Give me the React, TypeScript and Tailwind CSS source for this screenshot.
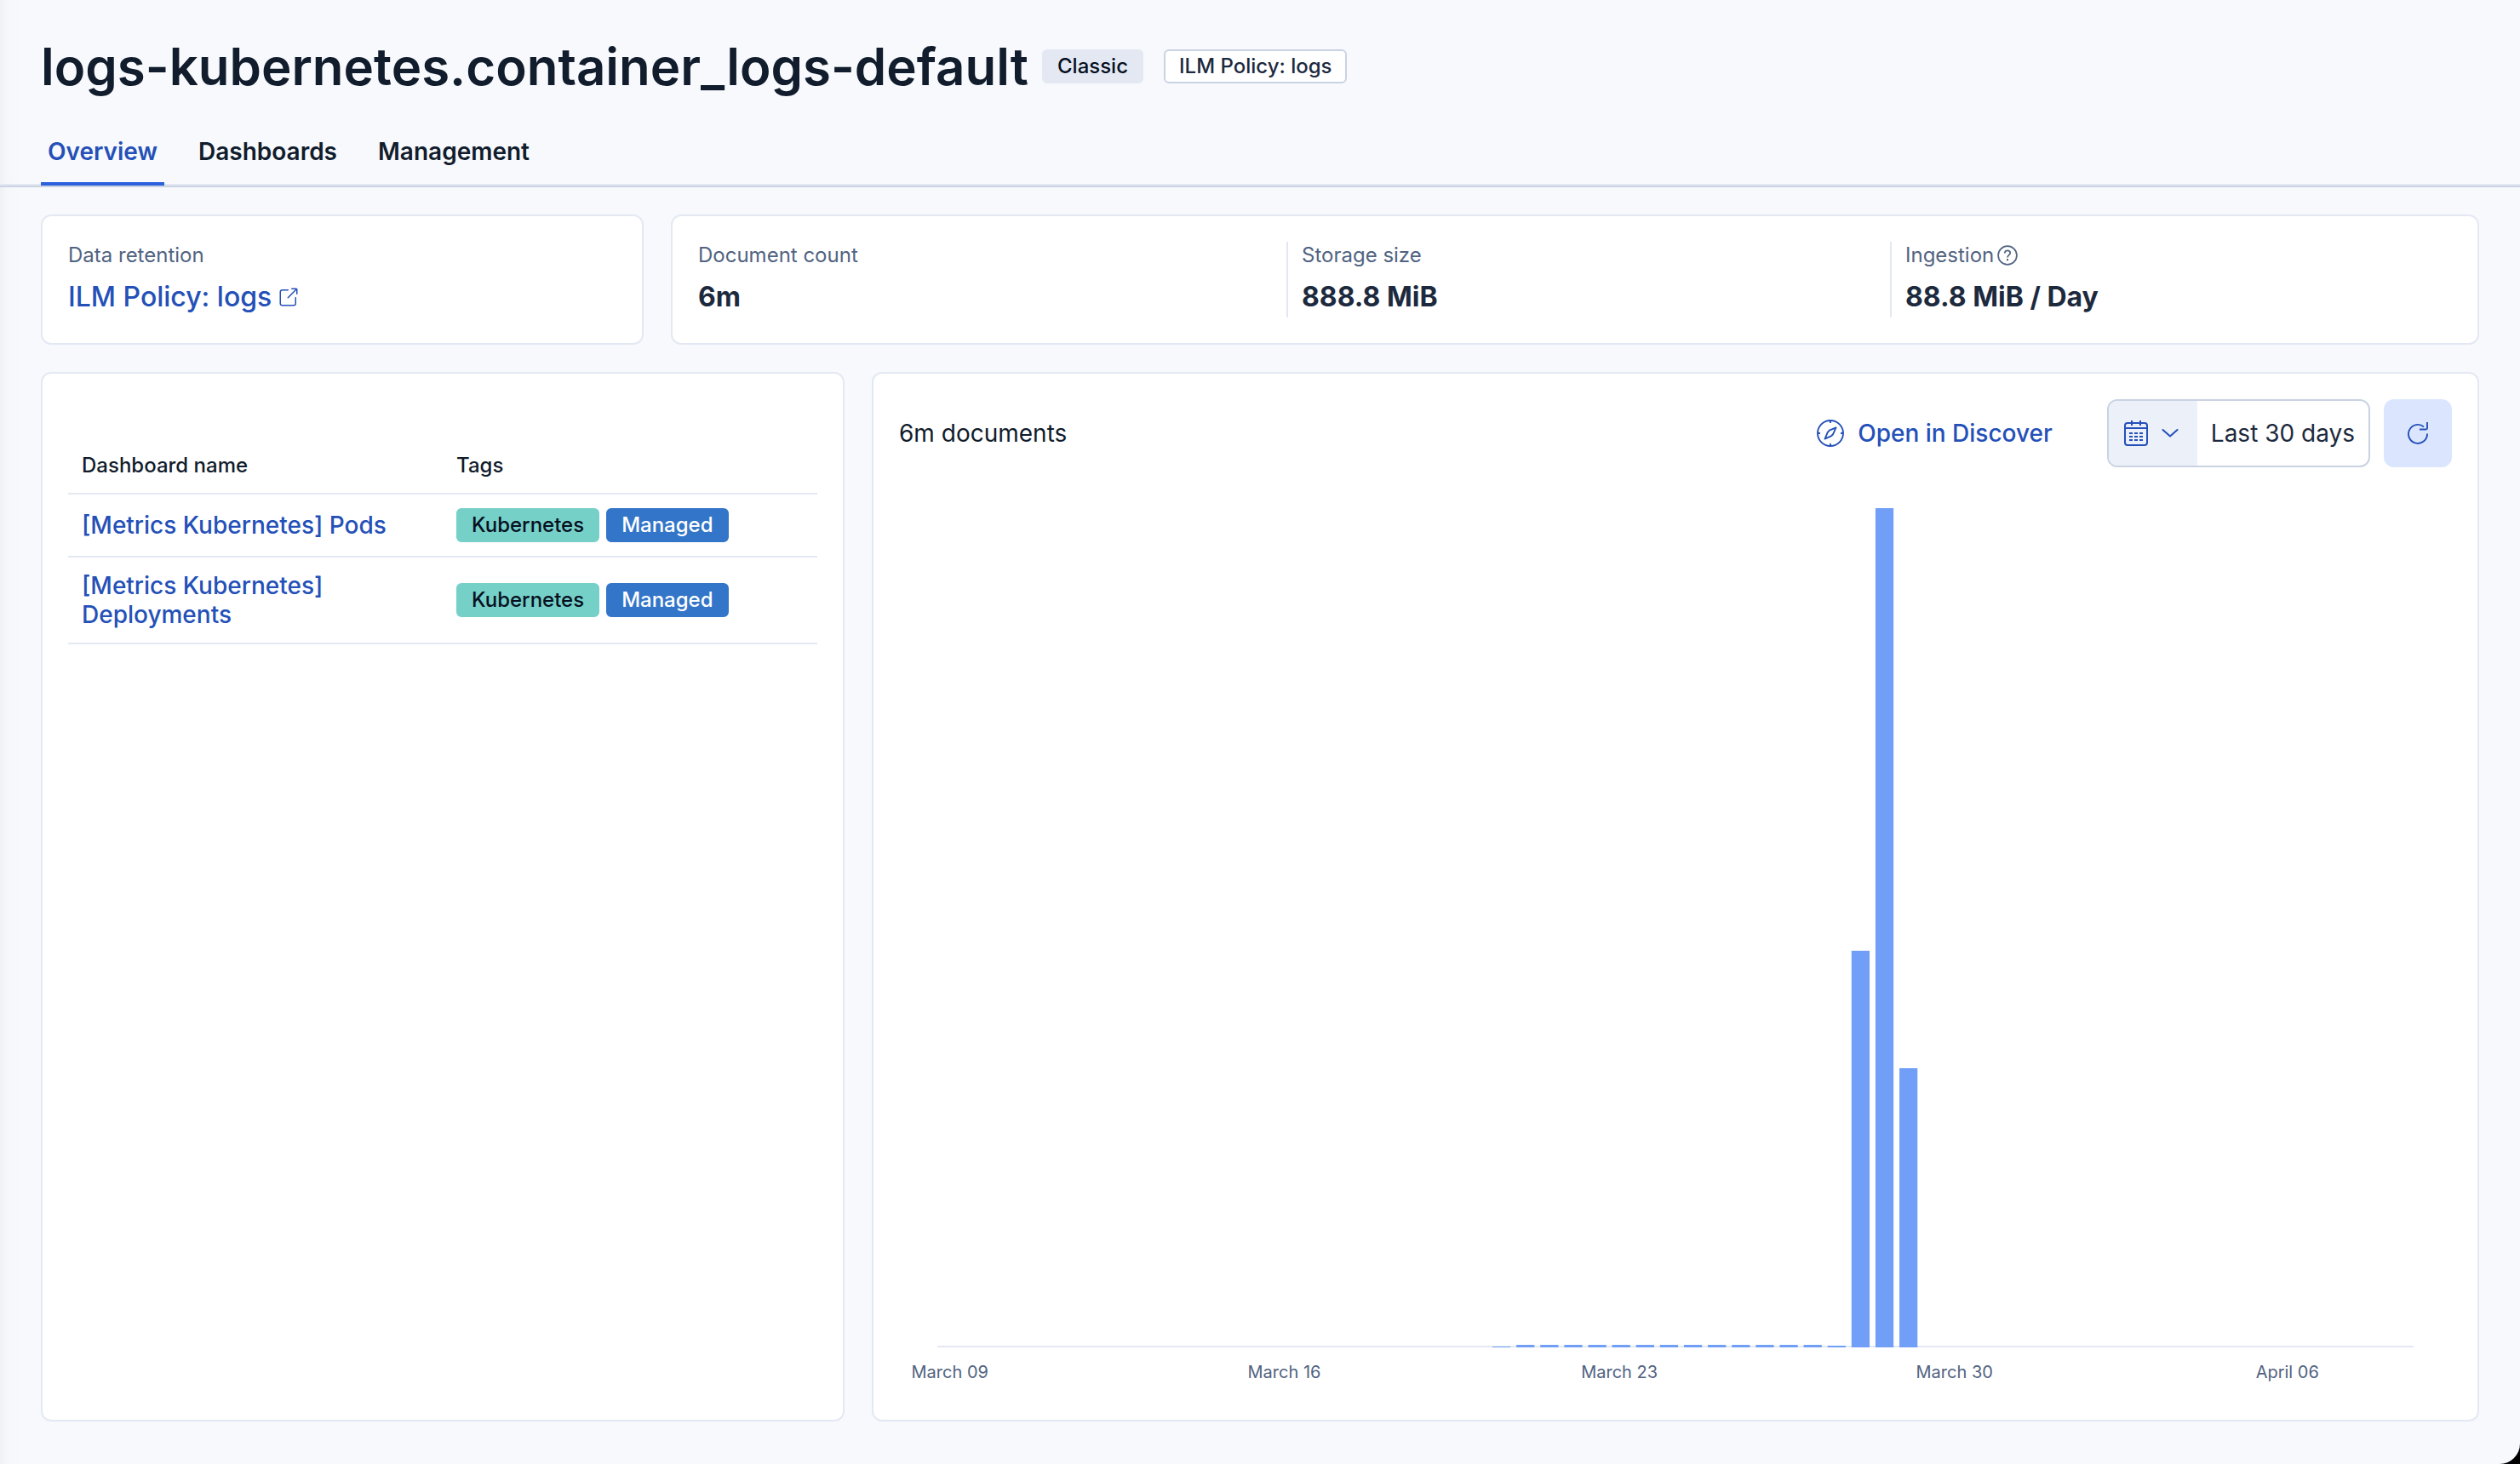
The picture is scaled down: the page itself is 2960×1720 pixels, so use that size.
import type { ReactNode } from "react";

const FIRST_BAR = 1753;
const PLOT_LEFT = 1101;
const PLOT_WIDTH = 1734;
const PITCH = 28.12;
const counts = [1, 3, 3, 3, 3, 3, 3, 3, 3, 3, 3, 3, 3, 3, 2, 466, 986, 328];
const MAX = 986;
const bars = counts.map((value, i) => ({
  left: ((FIRST_BAR - PLOT_LEFT + i * PITCH) / PLOT_WIDTH) * 100,
  height: (value / MAX) * 100,
}));
const ticks = [
  { label: "March 09", at: 0.85 },
  { label: "March 16", at: 23.5 },
  { label: "March 23", at: 46.2 },
  { label: "March 30", at: 68.9 },
  { label: "April 06", at: 91.45 },
];

const dashboards = ["[Metrics Kubernetes] Pods", "[Metrics Kubernetes] Deployments"];

function Card({ children, className }: { children: ReactNode; className: string }) {
  return (
    <section className={`rounded-xl border-2 border-[#e3e8f2] bg-white ${className}`}>{children}</section>
  );
}

function Badge({ children, className }: { children: ReactNode; className: string }) {
  return (
    <span
      className={`inline-flex h-10 items-center rounded-md border-2 px-4 text-2xl leading-9 font-medium ${className}`}
    >
      {children}
    </span>
  );
}

function Stat({ label, value, icon, className }: { label: string; value: string; icon?: ReactNode; className: string }) {
  return (
    <div className={className}>
      <div className="flex items-center gap-1 text-2xl leading-8 text-[#516381]">
        {label}
        {icon}
      </div>
      <div className="mt-2 text-[32px] leading-[49px] font-bold text-[#1d2a3e]">{value}</div>
    </div>
  );
}

function PopoutIcon() {
  return (
    <svg viewBox="0 0 16 16" className="size-6" fill="currentColor" aria-hidden="true">
      <path d="M13 8.5a.5.5 0 1 1 1 0V13a2 2 0 0 1-2 2H3a2 2 0 0 1-2-2V4a2 2 0 0 1 2-2h4.5a.5.5 0 0 1 0 1H3a1 1 0 0 0-1 1v9a1 1 0 0 0 1 1h9a1 1 0 0 0 1-1V8.5Zm-5.12.339a.5.5 0 1 1-.706-.707L13.305 2H10.5a.5.5 0 1 1 0-1H14a1 1 0 0 1 1 1v3.5a.5.5 0 1 1-1 0V2.72L7.88 8.838Z" />
    </svg>
  );
}

function QuestionIcon() {
  return (
    <svg viewBox="0 0 24 24" className="size-6" fill="none" stroke="currentColor" strokeWidth="1.7" aria-hidden="true">
      <circle cx="12" cy="12" r="10.9" />
      <path d="M8.8 9.6c0-1.900 1.300-3.200 3.200-3.200s3.200 1.200 3.200 2.900c0 2.200-3.200 2.400-3.200 5.100" />
      <path d="M12 16v2.200" strokeWidth="2" />
    </svg>
  );
}

function CompassIcon() {
  return (
    <svg viewBox="0 0 32 32" className="size-8" fill="none" stroke="currentColor" strokeWidth="1.9" aria-hidden="true">
      <circle cx="16" cy="16" r="15" />
      <path d="M16 1v3M16 28v3M1 16h3M28 16h3" />
      <path d="M22.500 9.300 14.800 12.600 12.800 14.800 9.500 22.600 17.200 19.200 19.200 17Z" strokeLinejoin="round" />
    </svg>
  );
}

function CalendarIcon() {
  return (
    <svg viewBox="0 0 28 30" className="h-[30px] w-7" fill="none" stroke="currentColor" strokeWidth="2" aria-hidden="true">
      <rect x="1" y="3" width="26" height="26" rx="3" />
      <path d="M1 9h26M9 0v6M19 0v6" />
      <path d="M6 15h16M6 19h16M6 23h16" strokeDasharray="4 2" />
    </svg>
  );
}

function ChevronIcon() {
  return (
    <svg viewBox="0 0 20 12" className="h-3 w-5" fill="none" stroke="currentColor" strokeWidth="2" strokeLinecap="round" strokeLinejoin="round" aria-hidden="true">
      <path d="M1.500 2 10 9.500 18.500 2" />
    </svg>
  );
}

function RefreshIcon() {
  return (
    <svg viewBox="0 0 24 26" className="h-[26px] w-6" fill="none" stroke="currentColor" strokeWidth="1.900" aria-hidden="true">
      <path d="M23 13.500A11 11 0 1 1 19 5.400" />
      <path d="M23 0v7a1.500 1.500 0 0 1-1.500 1.500H14" />
    </svg>
  );
}

export default function App() {
  return (
    <div className="bg-black font-[Inter,sans-serif]">
      <main className="flex min-h-screen flex-col rounded-br-[24px] bg-[linear-gradient(to_right,#eff1f5,#f5f7fb_8px,#f7f9fd_24px)] text-[#111c2c]">
        <header className="border-b-2 border-[#cad3e2]">
          <div className="border-b-2 border-[#e3e8f2] px-12">
            <div className="flex items-center pt-10">
              <h1 className="text-[60px] leading-[76px] font-semibold">logs-kubernetes.container_logs-default</h1>
              <div className="ml-4 flex gap-6">
                <Badge className="border-[#e3e8f2] bg-[#e3e8f2] text-[#07101f]">Classic</Badge>
                <Badge className="border-[#cad3e2] bg-white text-[#1d2a3e]">ILM Policy: logs</Badge>
              </div>
            </div>
            <nav className="mt-[26px] -mb-0.5 flex gap-8 text-[28px] leading-12 font-semibold">
              <a href="#overview" aria-current="page" className="border-b-4 border-[#2b61dd] px-2 py-3 text-[#2450b8]">
                Overview
              </a>
              <a href="#dashboards" className="px-2 pt-3">Dashboards</a>
              <a href="#management" className="px-2 pt-3">Management</a>
            </nav>
          </div>
        </header>

        <div className="flex grow flex-col gap-8 px-12 pt-8 pb-[50px]">
          <div className="grid grid-cols-[1fr_3fr] gap-8">
            <Card className="p-[30px]">
              <div className="text-2xl leading-8 text-[#516381]">Data retention</div>
              <a href="#ilm" className="mt-2 flex items-center gap-2 text-[32px] leading-[49px] font-medium text-[#2450b8]">
                ILM Policy: logs
                <PopoutIcon />
              </a>
            </Card>
            <Card className="grid grid-cols-[691fr_709fr_660fr] p-[30px]">
              <Stat className="" label="Document count" value="6m" />
              <Stat className="border-l-2 border-[#e3e8f2] pl-4" label="Storage size" value="888.8 MiB" />
              <Stat className="border-l-2 border-[#e3e8f2] pl-4" label="Ingestion" value="88.8 MiB / Day" icon={<QuestionIcon />} />
            </Card>
          </div>

          <div className="grid grow grid-cols-[1fr_2fr] gap-8">
            <Card className="px-[30px] pt-[76px]">
              <table className="w-full table-fixed text-left">
                <thead>
                  <tr className="border-b-2 border-[#e3e8f2] text-2xl leading-9">
                    <th className="px-4 py-3.5 font-medium">Dashboard name</th>
                    <th className="px-4 py-3.5 font-medium">Tags</th>
                  </tr>
                </thead>
                <tbody>
                  {dashboards.map((name) => (
                    <tr key={name} className="border-b-2 border-[#e3e8f2]">
                      <td className="px-4 py-4 text-[28px] leading-[34px] font-medium text-[#2450b8]">
                        <a href="#dashboard">{name}</a>
                      </td>
                      <td className="px-4 py-4">
                        <div className="flex gap-2">
                          <Badge className="border-[#75d0c8] bg-[#75d0c8] text-[#07101f]">Kubernetes</Badge>
                          <Badge className="border-[#3375c8] bg-[#3375c8] text-white">Managed</Badge>
                        </div>
                      </td>
                    </tr>
                  ))}
                </tbody>
              </table>
            </Card>

            <Card className="flex flex-col p-[30px]">
              <div className="flex items-center">
                <h2 className="grow text-[28px] leading-10 text-[#111c2c]">6m documents</h2>
                <a href="#discover" className="mr-16 flex items-center gap-4 text-[28px] leading-10 font-medium text-[#2450b8]">
                  <CompassIcon />
                  Open in Discover
                </a>
                <div className="flex h-20 overflow-hidden rounded-xl border-2 border-[#cad3e2]">
                  <button type="button" aria-label="Date quick select" className="flex w-[104px] items-center gap-4 bg-[#ecf1f9] pl-[18px] text-[#2450b8]">
                    <CalendarIcon />
                    <ChevronIcon />
                  </button>
                  <button type="button" className="px-4 text-[28px] leading-10 text-[#1d2a3e]">Last 30 days</button>
                </div>
                <button type="button" aria-label="Refresh" className="ml-4 flex size-20 items-center justify-center rounded-xl bg-[#dbe6fe] text-[#2450b8]">
                  <RefreshIcon />
                </button>
              </div>

              <div className="mt-12 flex grow flex-col px-[45px]">
                <svg className="h-0 w-full grow" role="img" aria-label="Documents over the last 30 days">
                  <rect x="0" y="100%" width="100%" height="2" transform="translate(0 -2)" fill="#e3e8f2" />
                  {bars.map((bar) => (
                    <rect key={bar.left} x={`${bar.left}%`} y={`${100 - bar.height}%`} width="1.225%" height={`${bar.height}%`} fill="#719ff8" />
                  ))}
                </svg>
                <svg className="h-[55px] w-full overflow-visible" aria-hidden="true">
                  {ticks.map((tick) => (
                    <text key={tick.label} x={`${tick.at}%`} y="36" textAnchor="middle" className="fill-[#516381] text-xl">
                      {tick.label}
                    </text>
                  ))}
                </svg>
              </div>
            </Card>
          </div>
        </div>
      </main>
    </div>
  );
}
